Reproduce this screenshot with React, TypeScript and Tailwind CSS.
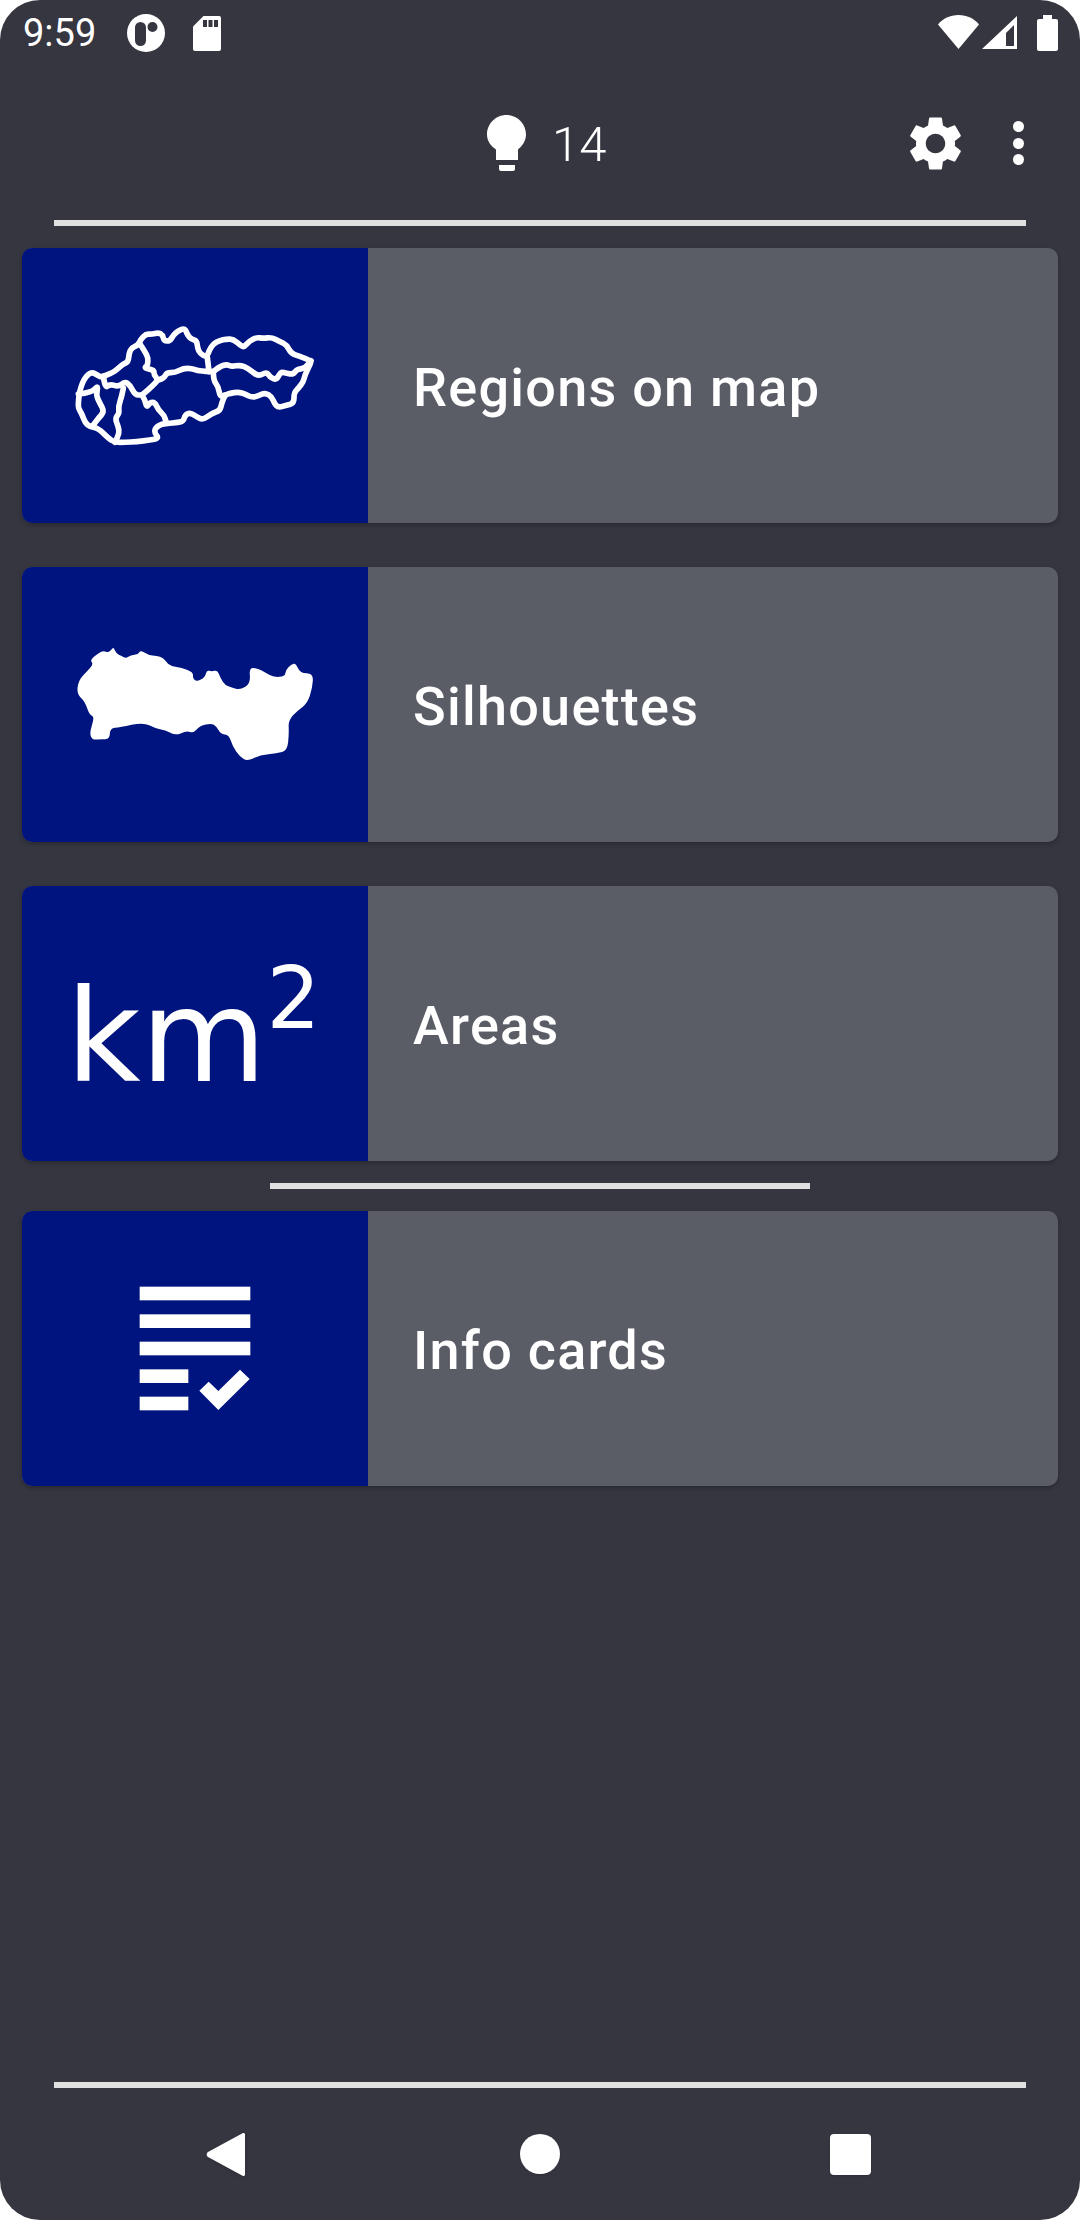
type Pt = [number, number];

const smooth = (pts: Pt[], closed: boolean): string => {
  const mid = (a: Pt, b: Pt): Pt => [(a[0] + b[0]) / 2, (a[1] + b[1]) / 2];
  if (closed) {
    const n = pts.length;
    const start = mid(pts[n - 1], pts[0]);
    let d = `M${start[0]} ${start[1]}`;
    for (let i = 0; i < n; i++) {
      const m = mid(pts[i], pts[(i + 1) % n]);
      d += `Q${pts[i][0]} ${pts[i][1]} ${m[0]} ${m[1]}`;
    }
    return d + "Z";
  }
  let d = `M${pts[0][0]} ${pts[0][1]}`;
  for (let i = 1; i < pts.length - 1; i++) {
    const m = mid(pts[i], pts[i + 1]);
    d += `Q${pts[i][0]} ${pts[i][1]} ${m[0]} ${m[1]}`;
  }
  const l = pts[pts.length - 1];
  return d + `L${l[0]} ${l[1]}`;
};

const outer: Pt[] = [[205,490],[207,465],[213,440],[222,418],[235,402],[248,397],[262,405],[275,412],[290,405],[310,397],[328,382],[340,372],[355,365],[357,340],[365,323],[385,315],[392,298],[408,282],[425,283],[445,278],[458,285],[462,303],[480,303],[490,285],[505,272],[525,264],[532,285],[545,298],[560,302],[563,325],[570,340],[590,352],[598,330],[610,312],[628,302],[650,297],[670,298],[690,315],[702,322],[718,303],[740,292],[760,295],[785,292],[810,305],[830,315],[843,340],[865,348],[905,362],[897,380],[885,405],[880,425],[865,445],[852,458],[852,490],[830,495],[805,503],[793,490],[785,470],[765,458],[745,468],[725,472],[705,462],[685,456],[660,460],[645,465],[635,490],[630,512],[605,520],[578,540],[560,530],[540,518],[525,525],[520,545],[495,548],[480,550],[455,552],[437,562],[433,578],[447,595],[420,600],[380,605],[345,607],[315,607],[295,595],[265,565],[240,560],[225,548],[215,520],[205,505]];
const inner: Pt[][] = [
  [[390,312],[405,335],[415,355],[412,378],[403,383],[420,388],[432,392],[432,405],[445,420],[425,440],[405,458],[395,465],[405,480],[410,503],[420,487],[435,487],[445,510],[462,525],[468,545]],
  [[445,420],[462,415],[470,398],[495,398],[520,385],[545,385],[565,393],[610,395]],
  [[592,352],[597,395]],
  [[610,395],[628,380],[650,373],[665,380],[690,375],[715,385],[745,410],[770,395],[780,412],[800,420],[812,395],[830,400],[850,403],[860,388],[885,385],[903,362]],
  [[610,395],[610,420],[625,440],[630,470],[645,465]],
  [[280,408],[285,445],[300,432],[325,440],[345,425],[360,435],[375,465],[395,465]],
  [[340,445],[335,470],[325,500],[328,520],[315,535],[325,560],[328,580],[315,607]],
  [[205,462],[245,458],[265,435],[258,465],[270,490],[283,515],[265,535],[250,555]],
];

const silhouette: Pt[] = [[240,300],[262,282],[280,272],[295,278],[305,268],[311,262],[318,280],[335,288],[348,295],[362,285],[385,283],[391,270],[415,285],[440,288],[460,293],[478,318],[515,323],[550,337],[548,355],[560,365],[585,352],[590,330],[605,335],[622,330],[632,355],[645,375],[665,382],[690,390],[722,370],[717,322],[745,326],[765,337],[790,352],[825,349],[827,330],[845,312],[858,310],[870,340],[910,340],[907,385],[892,430],[865,450],[835,480],[837,520],[832,572],[800,580],[750,585],[712,604],[690,590],[668,560],[657,525],[632,522],[620,500],[605,490],[570,497],[550,520],[530,512],[497,527],[465,510],[435,505],[400,487],[330,502],[300,505],[299,538],[272,537],[248,540],[238,520],[254,470],[238,465],[225,425],[200,402],[206,360],[235,330],[250,312]];

const RegionsMap = () => (
  <svg viewBox="36 24 1038 825" className="w-[346px] h-[275px]" fill="none" stroke="#fff" strokeWidth="17" strokeLinejoin="round" strokeLinecap="round">
    <path d={smooth(outer, true)} />
    {inner.map((p, i) => (
      <path key={i} d={smooth(p, false)} />
    ))}
  </svg>
);

const Silhouette = () => (
  <svg viewBox="36 21 1038 825" className="w-[346px] h-[275px]" fill="#fff">
    <path d={smooth(silhouette, true)} />
  </svg>
);

const Km = () => (
  <div className="w-[346px] h-[275px] flex items-start pl-[44px] pt-[55px] text-white font-['DejaVu_Sans',sans-serif]">
    <span className="text-[129px] leading-[190px]">km</span>
    <span className="text-[85px] leading-[100px] mt-[8px]">2</span>
  </div>
);

const Checklist = () => (
  <svg viewBox="36 63 1038 825" className="w-[346px] h-[275px]" fill="#fff">
    <rect x="389" y="290" width="332" height="41" />
    <rect x="389" y="373" width="332" height="41" />
    <rect x="389" y="455" width="332" height="41" />
    <rect x="389" y="538" width="146" height="41" />
    <rect x="389" y="620" width="146" height="41" />
    <path d="M568 602L596 575L625 603L690 539L719 567L625 660Z" />
  </svg>
);

const Card = ({ icon, label }: { icon: React.ReactNode; label: string }) => (
  <div className="mx-[22px] h-[275px] flex rounded-[10px] overflow-hidden bg-[#5a5c66] shadow-[0_2px_4px_rgba(0,0,0,0.25)]">
    <div className="w-[346px] shrink-0 bg-[#001480]">{icon}</div>
    <div className="flex-1 flex items-center pl-[45px] pt-[4px] text-white text-[54px] font-medium tracking-[1.25px] font-['Roboto',sans-serif]">
      {label}
    </div>
  </div>
);

export default function App() {
  return (
    <div className="w-[1080px] h-[2220px] bg-white font-['Roboto',sans-serif]">
      <div className="w-full h-full rounded-[40px] bg-[#363640] flex flex-col">
        <div className="h-[66px] flex items-start pt-[14px] pl-[23px] pr-[22px] text-white">
          <span className="text-[38px] leading-[38px] w-[104px]">9:59</span>
          <svg viewBox="0 0 38 38" className="w-[38px] h-[38px]">
            <circle cx="19" cy="19" r="19" fill="#fff" />
            <rect x="8" y="8" width="11" height="24" rx="5.5" fill="#363640" />
            <circle cx="25.5" cy="13" r="5" fill="#363640" />
          </svg>
          <svg viewBox="0 0 28 35" className="w-[28px] h-[35px] ml-[28px] mt-[2px]">
            <path d="M10.5 0H26a2 2 0 0 1 2 2V33a2 2 0 0 1-2 2H2a2 2 0 0 1-2-2V10.5Z" fill="#fff" />
            <rect x="10" y="4" width="4" height="7" fill="#363640" />
            <rect x="15.5" y="4" width="4" height="7" fill="#363640" />
            <rect x="21" y="4" width="4" height="7" fill="#363640" />
          </svg>
          <svg viewBox="0 0 41 34" className="w-[41px] h-[34px] ml-auto mt-[1px]">
            <path d="M0 9.5C5 3.500 12 0 20.500 0S36 3.500 41 9.500L20.500 34Z" fill="#fff" />
          </svg>
          <svg viewBox="0 0 35 33" className="w-[35px] h-[33px] ml-[3px] mt-[2px]">
            <path fillRule="evenodd" d="M0 33L35 0V33ZM24 30H32V9L24 17Z" fill="#fff" />
          </svg>
          <svg viewBox="0 0 21 36" className="w-[21px] h-[36px] ml-[20px] mt-[1px]">
            <path d="M6 0H15V4H19a2 2 0 0 1 2 2V34a2 2 0 0 1-2 2H2a2 2 0 0 1-2-2V6a2 2 0 0 1 2-2H6Z" fill="#fff" />
          </svg>
        </div>

        <div className="h-[154px] flex items-center pl-[487px] pr-[56px] text-white">
          <svg viewBox="0 0 39 56" className="w-[39px] h-[56px] mt-[-1px]">
            <path d="M9 45V34.500C3.500 31 0 25.500 0 19.500C0 8.700 8.700 0 19.500 0S39 8.700 39 19.500C39 25.500 35.500 31 31 34.500V45Z" fill="#fff" />
            <path d="M12 50H28V54a2 2 0 0 1-2 2H14a2 2 0 0 1-2-2Z" fill="#fff" />
          </svg>
          <span className="text-[49px] font-light ml-[26px] mt-[2px] leading-none">14</span>
          <svg viewBox="0 0 24 24" className="w-[65px] h-[65px] ml-auto mr-[45px]" fill="#fff">
            <path d="M19.14 12.940c.04-.3.06-.61.06-.94 0-.32-.02-.64-.07-.94l2.030-1.580c.18-.14.23-.41.12-.61l-1.920-3.320c-.12-.22-.37-.29-.59-.22l-2.390.96c-.5-.38-1.030-.7-1.620-.94l-.36-2.540c-.04-.24-.24-.41-.48-.41h-3.840c-.24 0-.43.17-.47.41l-.36 2.540c-.59.24-1.130.57-1.620.94l-2.390-.96c-.22-.08-.47 0-.59.22L2.740 8.870c-.12.21-.08.47.12.61l2.030 1.580c-.05.3-.09.63-.09.94s.02.64.07.94l-2.030 1.580c-.18.14-.23.41-.12.61l1.920 3.320c.12.22.37.29.59.22l2.390-.96c.5.38 1.030.7 1.620.94l.36 2.540c.05.24.24.41.48.41h3.840c.24 0 .44-.17.47-.41l.36-2.540c.59-.24 1.130-.56 1.620-.94l2.390.96c.22.08.47 0 .59-.22l1.920-3.320c.12-.22.07-.47-.12-.61l-2.010-1.580zM12 15.600c-1.980 0-3.600-1.620-3.600-3.600s1.620-3.600 3.600-3.600 3.600 1.620 3.600 3.600-1.620 3.600-3.600 3.600z" />
          </svg>
          <div className="flex flex-col gap-[5.5px]">
            <div className="w-[11px] h-[11px] rounded-full bg-white" />
            <div className="w-[11px] h-[11px] rounded-full bg-white" />
            <div className="w-[11px] h-[11px] rounded-full bg-white" />
          </div>
        </div>

        <div className="h-[6px] mx-[54px] bg-[#e0e0e0]" />
        <div className="mt-[22px] flex flex-col gap-[44px]">
          <Card icon={<RegionsMap />} label="Regions on map" />
          <Card icon={<Silhouette />} label="Silhouettes" />
          <Card icon={<Km />} label="Areas" />
        </div>
        <div className="h-[6px] mt-[22px] mb-[22px] mx-[270px] bg-[#e0e0e0]" />
        <Card icon={<Checklist />} label="Info cards" />

        <div className="mt-auto h-[6px] mx-[54px] bg-[#e0e0e0]" />
        <div className="h-[132px] flex items-start pt-[44px] pl-[206px] text-white">
          <svg viewBox="0 0 39 45" className="w-[39px] h-[45px] drop-shadow-sm">
            <path d="M37 1L2 20a3 3 0 0 0 0 5L37 44a1.500 1.500 0 0 0 2-1.500V2.500A1.500 1.500 0 0 0 37 1Z" fill="#fff" />
          </svg>
          <div className="w-[40px] h-[40px] rounded-full bg-white ml-[275px] mt-[2px] shadow-sm" />
          <div className="w-[41px] h-[41px] rounded-[4px] bg-white ml-[270px] mt-[2px] shadow-sm" />
        </div>
      </div>
    </div>
  );
}
